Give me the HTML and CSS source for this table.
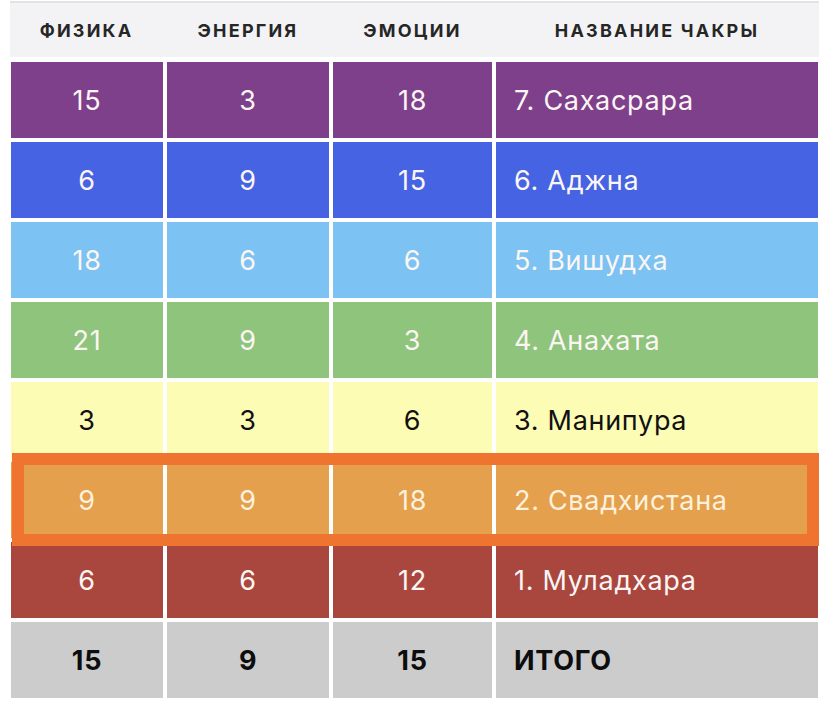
FILE: index.html
```html
<!DOCTYPE html>
<html lang="ru">
<head>
<meta charset="utf-8">
<title>Чакры</title>
<link rel="stylesheet" href="styles.css">
</head>
<body>
<div class="table">
  <div class="head">
    <div class="hcell">ФИЗИКА</div>
    <div class="hcell">ЭНЕРГИЯ</div>
    <div class="hcell">ЭМОЦИИ</div>
    <div class="hcell">НАЗВАНИЕ ЧАКРЫ</div>
  </div>
  <div class="rows">
    <div class="row c7"><div class="cell">15</div><div class="cell">3</div><div class="cell">18</div><div class="cell name">7. Сахасрара</div></div>
    <div class="row c6"><div class="cell">6</div><div class="cell">9</div><div class="cell">15</div><div class="cell name">6. Аджна</div></div>
    <div class="row c5"><div class="cell">18</div><div class="cell">6</div><div class="cell">6</div><div class="cell name">5. Вишудха</div></div>
    <div class="row c4"><div class="cell">21</div><div class="cell">9</div><div class="cell">3</div><div class="cell name">4. Анахата</div></div>
    <div class="row c3"><div class="cell">3</div><div class="cell">3</div><div class="cell">6</div><div class="cell name">3. Манипура</div></div>
    <div class="row c2 highlight"><div class="cell">9</div><div class="cell">9</div><div class="cell">18</div><div class="cell name">2. Свадхистана</div></div>
    <div class="row c1"><div class="cell">6</div><div class="cell">6</div><div class="cell">12</div><div class="cell name">1. Муладхара</div></div>
    <div class="row total"><div class="cell">15</div><div class="cell">9</div><div class="cell">15</div><div class="cell name">ИТОГО</div></div>
  </div>
</div>
</body>
</html>
```
FILE: styles.css
```css
html, body {
  margin: 0;
  padding: 0;
  background: #ffffff;
}
body {
  font-family: Inter, "Noto Sans", "DejaVu Sans", sans-serif;
}
.table {
  width: 810px;
  padding: 0 0 0 10px;
}
.head {
  display: grid;
  grid-template-columns: 153px 162px 159px 322px;
  column-gap: 4px;
  height: 54px;
  margin-top: 1px;
  border-top: 2px solid #e2e2e4;
  background: #f3f3f5;
  align-items: center;
  width: 809px;
}
.hcell {
  text-align: center;
  font-weight: 700;
  font-size: 18px;
  letter-spacing: 2.2px;
  color: #262626;
}
.rows {
  display: flex;
  flex-direction: column;
  gap: 4px;
  margin-top: 5px;
  padding-left: 1px;
}
.row {
  display: grid;
  grid-template-columns: 152px 162px 159px 322px;
  column-gap: 4px;
  height: 76px;
}
.cell {
  display: flex;
  align-items: center;
  justify-content: center;
  font-size: 27px;
  letter-spacing: 0.7px;
  color: #fbf6f4;
}
.cell.name {
  justify-content: flex-start;
  padding-left: 18px;
}
.c7 .cell { background: #7e3f8b; }
.c6 .cell { background: #4563e2; }
.c5 .cell { background: #7cc2f2; }
.c4 .cell { background: #8ec47b; }
.c3 .cell { background: #fdfcb5; color: #111111; }
.c2 .cell { background: #e4a04c; color: #fbf1dc; }
.c1 .cell { background: #a9473f; }
.total .cell { background: #cccccc; color: #0d0d0d; font-weight: 700; }
.highlight {
  position: relative;
}
.highlight::after {
  content: "";
  position: absolute;
  left: 1px;
  top: -9px;
  width: 807px;
  height: 93px;
  box-sizing: border-box;
  border: 12px solid #ee7430;
  pointer-events: none;
}
```
